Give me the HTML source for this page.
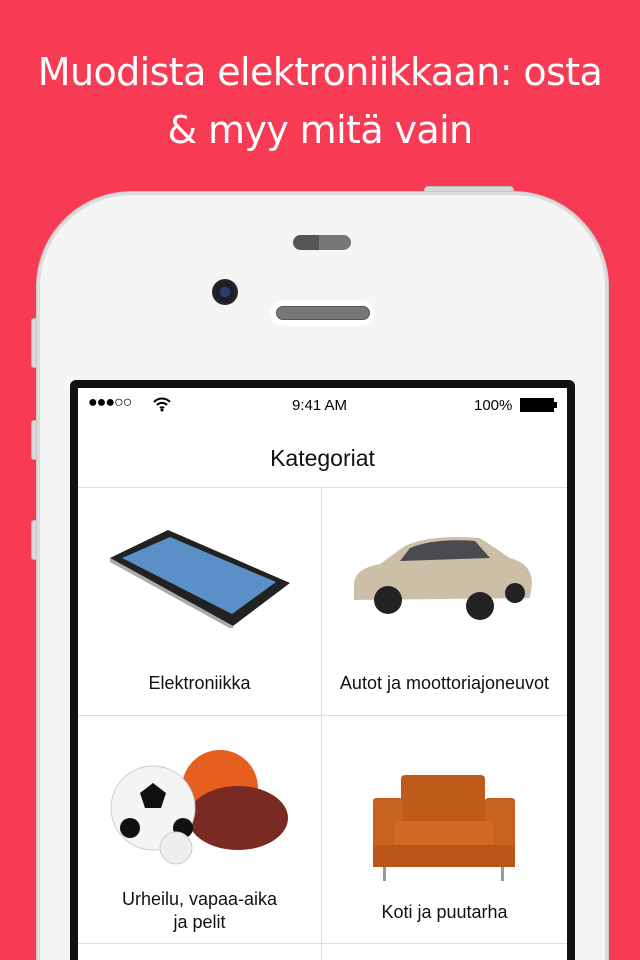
<!DOCTYPE html>
<html><head><meta charset="utf-8"><style>
*{margin:0;padding:0;box-sizing:border-box}
html,body{width:640px;height:960px;overflow:hidden}
body{background:#f83b54;font-family:"Liberation Sans",sans-serif;position:relative}
.h{position:absolute;top:43px;left:0;width:640px;text-align:center;color:#fff;font-size:38px;line-height:58px;font-family:"DejaVu Sans","Liberation Sans",sans-serif;letter-spacing:-0.6px}
.btn{position:absolute;background:#d8d8d8;border:1px solid #bbb}
.phone{position:absolute;left:37px;top:192px;width:571px;height:768px;background:#f5f5f5;border:3px solid #dcdcdc;border-bottom:none;border-radius:95px 95px 0 0;box-shadow:0 0 0 1px #c8c8c8}
.bez{position:absolute;left:70px;top:380px;width:505px;height:580px;background:#111;border-radius:6px 6px 0 0}
.scr{position:absolute;left:78px;top:388px;width:489px;height:572px;background:#fff;overflow:hidden}
.sb{position:absolute;top:9px;font-size:15px;color:#000}
.cell{position:absolute;text-align:center;font-size:18px;color:#111;line-height:23px}
</style></head><body>
<div class="h">Muodista elektroniikkaan: osta<br>&amp; myy mitä vain</div>
<div class="btn" style="left:424px;top:186px;width:90px;height:8px;border-radius:4px 4px 0 0"></div>
<div class="btn" style="left:31px;top:318px;width:8px;height:50px;border-radius:3px"></div>
<div class="btn" style="left:31px;top:420px;width:8px;height:40px;border-radius:3px"></div>
<div class="btn" style="left:31px;top:520px;width:8px;height:40px;border-radius:3px"></div>
<div class="phone"></div>
<div style="position:absolute;left:293px;top:235px;width:58px;height:15px;border-radius:8px;background:linear-gradient(90deg,#555 0 45%,#777 45%)"></div>
<div style="position:absolute;left:212px;top:279px;width:26px;height:26px;border-radius:50%;background:radial-gradient(circle,#2a3a6a 0 25%,#1a1a22 35%,#333 100%)"></div>
<div style="position:absolute;left:270px;top:300px;width:104px;height:26px;border-radius:13px;background:#fff"></div>
<div style="position:absolute;left:276px;top:306px;width:94px;height:14px;border-radius:7px;background:#777;border:1px solid #555"></div>
<div class="bez"></div>
<div class="scr">
 <div class="sb" style="left:10px;top:6px;font-size:16px;letter-spacing:-1px">●●●○○</div>
 <svg style="position:absolute;left:74px;top:8px" width="20" height="16" viewBox="0 0 20 16"><path d="M2 6a11 11 0 0 1 16 0M5 9a7 7 0 0 1 10 0M8 12a3 3 0 0 1 4 0" stroke="#000" stroke-width="2" fill="none"/><circle cx="10" cy="14" r="1.5"/></svg>
 <div class="sb" style="left:214px">9:41 AM</div>
 <div class="sb" style="left:396px">100%</div>
 <div style="position:absolute;left:442px;top:10px;width:34px;height:14px;border:1px solid #000;background:#000"></div>
 <div style="position:absolute;left:476px;top:14px;width:3px;height:6px;background:#000"></div>
 <div style="position:absolute;top:57px;width:489px;text-align:center;font-size:23px;color:#111">Kategoriat</div>
 <div style="position:absolute;top:99px;left:0;width:489px;height:1px;background:#ddd"></div>
 <div style="position:absolute;top:327px;left:0;width:489px;height:1px;background:#ddd"></div>
 <div style="position:absolute;top:555px;left:0;width:489px;height:1px;background:#ddd"></div>
 <div style="position:absolute;top:99px;left:243px;width:1px;height:480px;background:#ddd"></div>
 <svg style="position:absolute;left:30px;top:140px" width="185" height="100" viewBox="0 0 185 100"><polygon points="2,30 60,2 182,55 125,98" fill="#222"/><polygon points="14,30 62,9 168,54 124,86" fill="#5a8fc8"/><polygon points="2,30 125,98 125,102 2,34" fill="#aaa"/></svg>
 <svg style="position:absolute;left:272px;top:140px" width="185" height="100" viewBox="0 0 185 100"><path d="M4 55 Q6 40 30 36 L55 18 Q80 6 130 10 L160 30 Q182 36 182 55 L180 70 L4 72Z" fill="#cbbfa8"/><path d="M60 20 Q85 10 125 13 L140 30 L50 33Z" fill="#4a4a50"/><circle cx="38" cy="72" r="14" fill="#222"/><circle cx="130" cy="78" r="14" fill="#222"/><circle cx="165" cy="65" r="10" fill="#222"/></svg>
 <div class="cell" style="left:0;top:284px;width:243px">Elektroniikka</div>
 <div class="cell" style="left:244px;top:284px;width:245px">Autot ja moottoriajoneuvot</div>
 <svg style="position:absolute;left:30px;top:360px" width="185" height="120" viewBox="0 0 185 120"><circle cx="112" cy="40" r="38" fill="#e5601f"/><ellipse cx="130" cy="70" rx="50" ry="32" fill="#7a2a22"/><circle cx="45" cy="60" r="42" fill="#f4f4f4" stroke="#ccc"/><polygon points="45,35 58,45 53,60 37,60 32,45" fill="#111"/><circle cx="22" cy="80" r="10" fill="#111"/><circle cx="75" cy="80" r="10" fill="#111"/><circle cx="68" cy="100" r="16" fill="#eee" stroke="#ccc"/></svg>
 <svg style="position:absolute;left:295px;top:385px" width="142" height="110" viewBox="0 0 142 110"><rect x="28" y="2" width="84" height="50" rx="4" fill="#c05a1a"/><rect x="0" y="25" width="30" height="68" rx="3" fill="#c8621f"/><rect x="112" y="25" width="30" height="68" rx="3" fill="#c8621f"/><rect x="22" y="48" width="98" height="27" rx="4" fill="#d06a25"/><rect x="0" y="72" width="142" height="22" fill="#b8561a"/><rect x="10" y="94" width="3" height="14" fill="#999"/><rect x="128" y="94" width="3" height="14" fill="#999"/></svg>
 <div class="cell" style="left:0;top:500px;width:243px">Urheilu, vapaa-aika<br>ja pelit</div>
 <div class="cell" style="left:244px;top:513px;width:245px">Koti ja puutarha</div>
</div>
</body></html>
